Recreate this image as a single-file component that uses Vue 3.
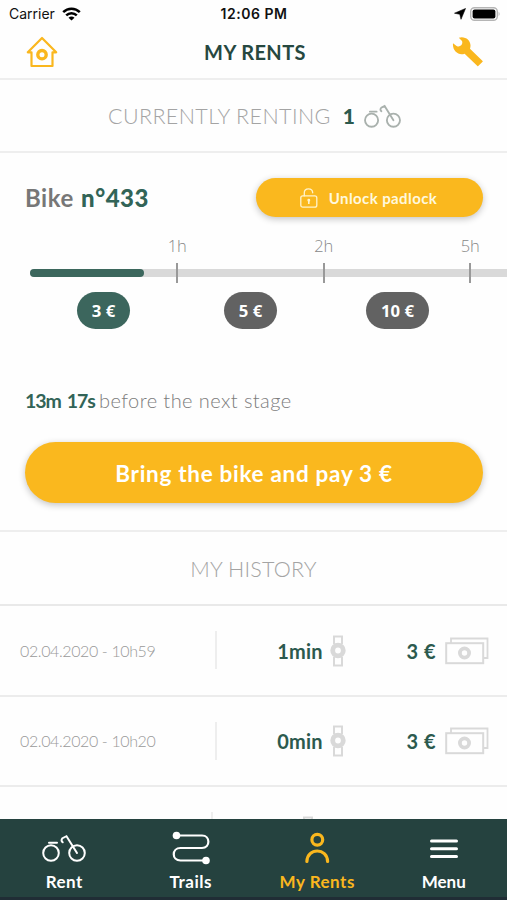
<script setup>
const stages = [
  { label: '1h', price: '3 €', active: true },
  { label: '2h', price: '5 €', active: false },
  { label: '5h', price: '10 €', active: false }
]
const history = [
  { date: '02.04.2020 - 10h59', duration: '1min', price: '3 €' },
  { date: '02.04.2020 - 10h20', duration: '0min', price: '3 €' }
]
</script>

<template>
  <main class="screen">
    <div class="status">
      <div class="carrier">
        <span class="carrier-name">Carrier</span>
        <svg width="19" height="14" viewBox="0 0 19 14">
          <g fill="none" stroke="#000" stroke-width="2.5">
            <path d="M1.2 5.2C5.8.6 13.2.6 17.8 5.2" />
            <path d="M4.2 8.4C7.2 5.5 11.8 5.5 14.8 8.4" />
          </g>
          <path d="M9.5 13.6L6.5 10.7C8.2 9.1 10.8 9.1 12.5 10.7Z" />
        </svg>
      </div>
      <span class="time">12:06 PM</span>
      <div class="indicators">
        <svg width="12" height="12" viewBox="0 0 12 12">
          <path d="M11.500.5L7 11.300L5.800 6.300L.5 5.200Z" stroke="#000" stroke-width=".6" />
        </svg>
        <svg width="31" height="14" viewBox="0 0 31 14">
          <rect x=".7" y=".7" width="26.600" height="12.600" rx="3.800" fill="#fff" stroke="#b5b5b5" stroke-width="1.400" />
          <rect x="2.600" y="2.400" width="22.800" height="9.200" rx="2" />
          <path d="M28.600 4.800Q30.600 7 28.600 9.200Z" fill="#b5b5b5" />
        </svg>
      </div>
    </div>

    <header class="header">
      <svg width="32" height="32" viewBox="0 0 32 32" fill="none" stroke="#fab71e">
        <path d="M5.500 16.300H1.800L16 2L30.200 16.300H26.500V30H5.500Z" stroke-width="2.200" stroke-linejoin="round" />
        <circle cx="16" cy="18.700" r="4.200" stroke-width="3.400" />
      </svg>
      <h1>MY RENTS</h1>
      <svg width="32" height="32" viewBox="0 0 32 32">
        <path d="M6.800 1.700C12.500-.3 18.600 3.800 18.500 9.500Q18.500 11.200 18 12.700L30.600 24.900Q31 25.300 30.600 25.700L26.200 30.100Q25.800 30.500 25.400 30.100L12.600 17.700C6.500 20 .2 14.800 1 7.300L4.600 9.900Q7.200 11.200 9.200 9.300Q10.900 7.300 10 5Z" fill="#fab71e" />
      </svg>
    </header>

    <section class="renting">
      <h2>CURRENTLY RENTING</h2>
      <strong>1</strong>
      <svg width="37" height="24" viewBox="0 0 44 28" fill="none" stroke="#a9b1ad" stroke-width="2.200" stroke-linecap="round">
        <circle cx="9" cy="19" r="7.800" /><circle cx="35" cy="19" r="7.800" />
        <path d="M7 8.800H15M35 19L24.500 2.200L20.500 4.200Q18.500 6.500 20.700 8.300" />
      </svg>
    </section>

    <section class="rental">
      <div class="rental-head">
        <div class="bike">Bike <b>n°433</b></div>
        <button class="unlock">
          <svg width="18" height="20" viewBox="0 0 18 20" fill="none" stroke="#fff3cc" stroke-width="1.300">
            <rect x=".8" y="7.800" width="16" height="11.400" rx="2" />
            <path d="M4.300 7.800V4.800C4.300-.5 12.500-.5 12.700 4.800" stroke-linecap="round" />
            <path d="M8.800 12.500V16" stroke-width="1.600" /><circle cx="8.800" cy="12.300" r=".8" fill="#fff3cc" />
          </svg>
          <span>Unlock padlock</span>
        </button>
      </div>
      <div class="timeline">
        <div class="labels"><span v-for="s in stages" :key="s.label">{{ s.label }}</span></div>
        <div class="track">
          <div class="progress"></div>
          <div class="ticks"><i v-for="s in stages" :key="s.label"></i></div>
        </div>
        <div class="prices">
          <div v-for="s in stages" :key="s.price">
            <span class="pill" :class="{ active: s.active }">{{ s.price }}</span>
          </div>
        </div>
      </div>
      <p class="remaining"><b>13m 17s</b> <span>before the next stage</span></p>
      <button class="pay"><span>Bring the bike and pay 3 €</span></button>
    </section>

    <h2 class="history-title"><span>MY HISTORY</span></h2>
    <section class="history">
      <article v-for="h in history" :key="h.date" class="row">
        <div class="date"><span>{{ h.date }}</span></div>
        <div class="duration">
          <span>{{ h.duration }}</span>
          <svg width="16" height="32" viewBox="0 0 16 32" fill="none" stroke="#d9d9d9">
            <path d="M4 9V1.500H12V9M4 22V30.500H12V22" stroke-width="2" />
            <circle cx="8" cy="15.500" r="5.300" stroke-width="4.800" />
          </svg>
        </div>
        <div class="price">
          <span>{{ h.price }}</span>
          <svg width="44" height="28" viewBox="0 0 44 28" fill="none" stroke="#d9d9d9">
            <path d="M6 6V1.500H42.500V21H38.500" stroke-width="1.800" />
            <rect x="1.200" y="6.200" width="37" height="20" stroke-width="2" />
            <circle cx="19.500" cy="16" r="4.600" stroke-width="3.800" />
          </svg>
        </div>
      </article>
      <article class="row next">
        <div class="date"></div>
        <div class="duration">
          <svg width="16" height="32" viewBox="0 0 16 32" fill="none" stroke="#d9d9d9">
            <path d="M4 9V1.500H12V9" stroke-width="2" />
          </svg>
        </div>
      </article>
    </section>

    <nav class="nav">
      <a class="rent">
        <svg width="44" height="28" viewBox="0 0 44 28" fill="none" stroke="#fff" stroke-width="2" stroke-linecap="round">
          <circle cx="9" cy="19" r="7.800" /><circle cx="35" cy="19" r="7.800" />
          <path d="M7 8.800H15M35 19L24.500 2.200L20.500 4.200Q18.500 6.500 20.700 8.300" />
        </svg>
        <span>Rent</span>
      </a>
      <a class="trails">
        <svg width="38" height="34" viewBox="0 0 38 34" fill="none" stroke="#fff" stroke-width="2.200">
          <path d="M4 4.500H30C38.500 4.500 38.500 17 30 17H8.500C-.5 17-.5 29.500 8.500 29.500H34" />
          <g fill="#fff" stroke="none"><circle cx="4.500" cy="4.500" r="3.800" /><circle cx="34" cy="29.500" r="3.800" /></g>
        </svg>
        <span>Trails</span>
      </a>
      <a class="mine">
        <svg width="26" height="34" viewBox="0 0 26 34" fill="none" stroke="#fab71e" stroke-width="3.200" stroke-linecap="round">
          <circle cx="13.300" cy="8.800" r="5.400" />
          <path d="M2.900 30.500C3.200 16.500 23.300 16.500 23.600 30.500" />
        </svg>
        <span>My Rents</span>
      </a>
      <a class="menu">
        <svg width="28" height="20" viewBox="0 0 28 20" stroke="#fff" stroke-width="3" stroke-linecap="round">
          <path d="M1.500 2H26.500M1.500 9.700H26.500M1.500 17.400H26.500" />
        </svg>
        <span>Menu</span>
      </a>
    </nav>
  </main>
</template>

<style>
body { margin: 0; background: #fff; }
</style>

<style scoped>
* { box-sizing: border-box; }
.screen { width: 507px; height: 900px; overflow: hidden; display: flex; flex-direction: column; background: #fefefe; font-family: Lato, "Open Sans", sans-serif; color: #2c5a4e; }
h1, h2, p { margin: 0; }
svg { display: block; flex: none; }
span, strong, b { white-space: nowrap; }
button { border: 0; padding: 0; font-family: inherit; background: #fab81e; color: #fff; box-shadow: 0 2px 7px rgba(0, 0, 0, .24); display: flex; align-items: center; justify-content: center; }

.status { flex: none; height: 27px; display: grid; grid-template-columns: 1fr auto 1fr; align-items: center; padding: 0 6px 0 9px; font-family: Inter, sans-serif; color: #111; }
.carrier { display: flex; align-items: center; gap: 7px; font-size: 14px; }
.time { font-size: 14px; font-weight: 600; letter-spacing: .5px; margin-right: 2px; }
.indicators { display: flex; justify-content: flex-end; align-items: center; gap: 4px; }

.header { flex: none; height: 53px; display: flex; align-items: center; justify-content: space-between; padding: 0 23px 2px 26px; border-bottom: 2px solid #eee; }
h1 { font-size: 20px; font-weight: 700; letter-spacing: .4px; color: #264840; }

.renting { flex: none; height: 73px; display: flex; align-items: center; border-bottom: 2px solid #eee; padding-left: 108px; }
h2 { font-size: 21.500px; font-weight: 300; color: #a4a4a4; letter-spacing: .4px; }
.renting strong { font-size: 21px; font-weight: 900; width: 33px; padding-left: 12px; }

.rental { flex: none; height: 379px; border-bottom: 2px solid #eee; padding: 25px 24px 0 25px; }
.rental-head { display: flex; justify-content: space-between; height: 39px; }
.bike { font-size: 24px; font-weight: 700; color: #777; line-height: 40px; letter-spacing: .5px; }
.bike b { color: #326457; margin-left: 1px; }
.unlock { width: 227px; height: 39px; border-radius: 20px; gap: 11px; padding-right: 2px; font-size: 15px; font-weight: 700; color: #fff8dd; letter-spacing: .4px; }
.timeline { margin: 17px -24px 0 5px; }
.labels { display: flex; padding-left: 74px; font: 300 16.500px/24px "Open Sans", sans-serif; color: #888; }
.labels span { width: 146.500px; text-align: center; flex: none; }
.track { height: 8px; margin-top: 11px; background: #d9d9d9; border-radius: 4px 0 0 4px; display: flex; align-items: center; }
.progress { width: 114px; height: 8px; border-radius: 4px; background: #3c675d; flex: none; }
.ticks { display: flex; gap: 144.500px; margin-left: 32px; }
.ticks i { width: 2px; height: 20px; background: #999; flex: none; }
.prices { display: flex; margin-top: 15px; }
.prices div { width: 147px; display: flex; justify-content: center; flex: none; }
.pill { height: 37px; border-radius: 19px; padding: 0 15px; background: #626262; color: #fff; font: 700 16.700px/37px "Noto Sans", sans-serif; }
.pill.active { background: #3c665d; }
.remaining { margin-top: 58px; height: 26px; line-height: 26px; font-size: 20px; color: #7c7c7c; display: flex; align-items: baseline; gap: 6px; }
.remaining b { width: 68px; font-size: 19.500px; letter-spacing: -1px; word-spacing: 2px; color: #326457; }
.remaining span { font-weight: 300; letter-spacing: .43px; }
.pay { width: 458px; height: 61px; margin-top: 29px; padding-top: 2px; border-radius: 31px; font-size: 22.500px; font-weight: 700; letter-spacing: .7px; }

.history-title { flex: none; height: 74px; line-height: 74px; text-align: center; border-bottom: 2px solid #e9e9e9; letter-spacing: .2px; }
.history { flex: 1; min-height: 0; overflow: hidden; }
.row { height: 90.500px; border-bottom: 2px solid #ececec; display: flex; align-items: center; }
.date { width: 217px; height: 38px; display: flex; align-items: center; border-right: 2px solid #eee; padding-left: 20px; font-size: 16px; font-weight: 300; color: #999; letter-spacing: -.38px; }
.duration { width: 145px; height: 38px; display: flex; align-items: center; justify-content: center; gap: 7px; padding: 1px 10px 0 54px; font-size: 20px; font-weight: 700; letter-spacing: .2px; }
.price { flex: 1; display: flex; align-items: center; justify-content: flex-end; padding: 1px 18px 0 0; gap: 9px; font-size: 20px; font-weight: 700; letter-spacing: .5px; }
.next .date { width: 213px; }

.nav { flex: none; height: 81px; display: grid; grid-template-columns: repeat(4, 126.500px); padding-left: 1px; background: #25423f; border-bottom: 3px solid #202d35; color: #fff; }
.nav a { display: flex; flex-direction: column; align-items: center; justify-content: space-between; padding: 12px 0 3px; font-size: 17px; font-weight: 700; line-height: 24px; letter-spacing: .5px; }
.nav .rent svg { margin-top: 3px; }
.nav .menu svg { margin-top: 8px; }
.nav .menu { letter-spacing: 0; }
.nav .mine { color: #fab71e; }
</style>
